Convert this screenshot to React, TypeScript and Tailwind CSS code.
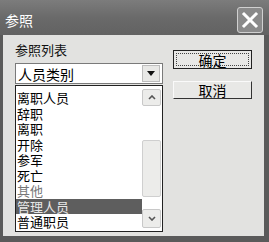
import React from "react";

const items = ["离职人员", "辞职", "离职", "开除", "参军", "死亡", "其他", "管理人员", "普通职员"];

export default function App() {
  return (
    <div
      className="w-[269px] h-[242px] bg-[#5a5a5a] flex flex-col overflow-hidden"
      style={{ fontFamily: '"Noto Sans CJK SC", "Noto Sans", sans-serif' }}
    >
      {/* Title bar */}
      <div className="h-[35px] flex items-center justify-between pl-[5px] pr-[6px] bg-gradient-to-b from-[#7c7c7c] via-[#6a6a6a] to-[#626262]">
        <span className="text-white text-[14px] leading-none mt-[5px]">参照</span>
        <div className="w-[26px] h-[26px] mt-[5px] border border-[#d0d0d0] rounded-[3px] bg-[#8a8a8a] flex items-center justify-center">
          <svg width="18" height="18" viewBox="0 0 18 18">
            <path d="M3 3 L15 15 M15 3 L3 15" stroke="#ffffff" strokeWidth="3" strokeLinecap="square" />
          </svg>
        </div>
      </div>
      {/* Body */}
      <div className="flex-1 ml-[3px] mr-[5px] mb-[6px] bg-[#e2e2e0] flex pl-[12px] pt-[7px]">
        <div className="w-[148px] flex flex-col">
          <div className="text-[13px] leading-[16px] text-[#111] h-[21px]">参照列表</div>
          {/* Combo */}
          <div className="h-[21px] bg-white border border-[#7a7a7a] flex items-center justify-between pl-[2px] pr-[2px]">
            <span className="text-[14px] leading-none text-black">人员类别</span>
            <div className="w-[18px] h-[17px] bg-[#e8e8e6] border border-[#bdbdbd] flex items-center justify-center">
              <svg width="8" height="5" viewBox="0 0 8 5">
                <path d="M0 0 L8 0 L4 5 Z" fill="#111" />
              </svg>
            </div>
          </div>
          {/* List */}
          <div className="h-[147px] bg-white border border-[#222] flex mt-[1px]">
            <div className="flex-1 flex flex-col pt-[4px]">
              {items.map((t) => (
                <div
                  key={t}
                  className={
                    "h-[15.5px] text-[13px] leading-[15.5px] pl-[1px] " +
                    (t === "管理人员"
                      ? "bg-[#5e5e5e] text-[#e8e8e8]"
                      : t === "其他"
                      ? "text-[#777]"
                      : "text-black")
                  }
                >
                  {t}
                </div>
              ))}
            </div>
            <div className="w-[19px] mr-[1px] flex flex-col py-[3px] gap-[1px]">
              <div className="h-[17px] bg-[#ececea] border border-[#c8c8c8] rounded-[2px] flex items-center justify-center">
                <svg width="8" height="5" viewBox="0 0 8 5">
                  <path d="M1 4 L4 1 L7 4" stroke="#555" strokeWidth="1.6" fill="none" />
                </svg>
              </div>
              <div className="h-[32px]" />
              <div className="h-[57px] bg-[#ececea] border border-[#cfcfcf] rounded-[2px]" />
              <div className="flex-1" />
              <div className="h-[19px] bg-[#ececea] border border-[#c8c8c8] rounded-[2px] flex items-center justify-center">
                <svg width="8" height="5" viewBox="0 0 8 5">
                  <path d="M1 1 L4 4 L7 1" stroke="#555" strokeWidth="1.6" fill="none" />
                </svg>
              </div>
            </div>
          </div>
        </div>
        <div className="ml-[10px] pt-[8px] flex flex-col gap-[12px]">
          <div className="w-[79px] h-[19px] border border-[#222] bg-[#e8e8e6] p-[2px]">
            <div className="w-full h-full border border-dotted border-[#444] flex items-center justify-center text-[14px] leading-none text-black">
              确定
            </div>
          </div>
          <div className="w-[79px] h-[18px] border-t border-l border-[#fafafa] border-b-[#333] border-r-[#333] border-b border-r bg-[#e8e8e6] flex items-center justify-center text-[14px] leading-none text-black">
            取消
          </div>
        </div>
      </div>
    </div>
  );
}
